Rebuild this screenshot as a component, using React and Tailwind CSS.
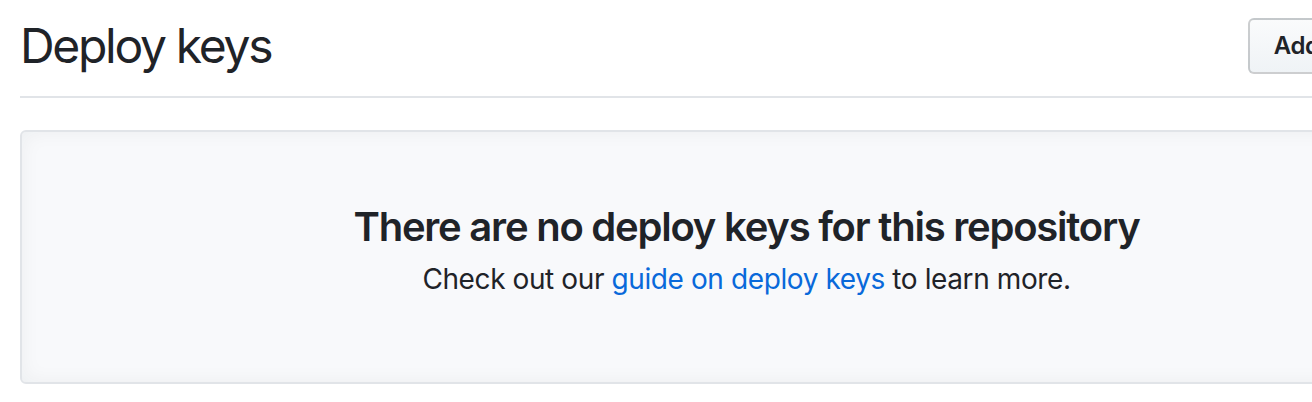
export default function App() {
  return (
    <div
      className="w-[1312px] h-[402px] overflow-hidden bg-white text-[#1f2328]"
      style={{ fontFamily: 'Inter, "Noto Sans", "Liberation Sans", sans-serif' }}
    >
      <div className="w-[1493px] px-[20px] pt-[10px]">
        <div className="flex items-center justify-between border-b-2 border-[#e1e4e8] pb-[14px] mb-[32px]">
          <h2 className="text-[48px] leading-[72px] font-normal tracking-[-2.3px]">Deploy keys</h2>
          <button className="h-[56px] px-[24px] text-[24px] leading-[40px] font-semibold tracking-[-0.4px] text-[#1f2328] rounded-[6px] border-2 border-[rgba(27,31,35,0.2)] bg-gradient-to-b from-[#fafbfc] to-[#eff3f6] whitespace-nowrap">
            Add deploy key
          </button>
        </div>
        <div className="h-[254px] rounded-[6px] border-2 border-[#e1e4e8] bg-[#f8f9fb] shadow-[inset_0_0_20px_rgba(27,31,35,0.05)] flex flex-col items-center pt-[71px]">
          <h3 className="text-[40px] leading-[48px] font-semibold tracking-[-1.23px]">There are no deploy keys for this repository</h3>
          <p className="mt-[7px] text-[28px] leading-[42px] tracking-[-0.4px]">
            Check out our <a className="text-[#0969da]" href="#">guide on deploy keys</a> to learn more.
          </p>
        </div>
      </div>
    </div>
  );
}
